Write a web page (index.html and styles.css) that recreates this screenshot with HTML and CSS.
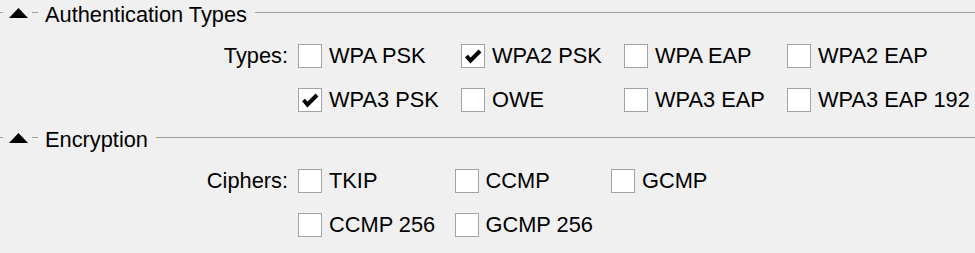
FILE: index.html
```html
<!DOCTYPE html>
<html lang="en">
<head>
  <meta charset="UTF-8">
  <title>Security Profile</title>
  <link rel="stylesheet" href="styles.css">
</head>
<body>
  <section class="group">
    <div class="group-head">
      <span class="dash dash-left"></span>
      <svg class="arrow" width="19" height="10" viewBox="0 0 19 10"><polygon points="9.5,0 19,10 0,10" fill="#000"/></svg>
      <span class="dash dash-mid"></span>
      <span class="group-title">Authentication Types</span>
      <span class="rule"></span>
    </div>
    <div class="field">
      <div class="field-label">Types:</div>
      <div class="options types">
        <label class="option"><span class="box"></span>WPA PSK</label>
        <label class="option"><span class="box checked"><svg width="24" height="24" viewBox="0 0 24 24"><polyline points="5.5,12 9.5,16.5 19,7" fill="none" stroke="#000" stroke-width="4"/></svg></span>WPA2 PSK</label>
        <label class="option"><span class="box"></span>WPA EAP</label>
        <label class="option"><span class="box"></span>WPA2 EAP</label>
        <label class="option"><span class="box checked"><svg width="24" height="24" viewBox="0 0 24 24"><polyline points="5.5,12 9.5,16.5 19,7" fill="none" stroke="#000" stroke-width="4"/></svg></span>WPA3 PSK</label>
        <label class="option"><span class="box"></span>OWE</label>
        <label class="option"><span class="box"></span>WPA3 EAP</label>
        <label class="option"><span class="box"></span>WPA3 EAP 192</label>
      </div>
    </div>
  </section>

  <section class="group">
    <div class="group-head">
      <span class="dash dash-left"></span>
      <svg class="arrow" width="19" height="10" viewBox="0 0 19 10"><polygon points="9.5,0 19,10 0,10" fill="#000"/></svg>
      <span class="dash dash-mid"></span>
      <span class="group-title">Encryption</span>
      <span class="rule"></span>
    </div>
    <div class="field">
      <div class="field-label">Ciphers:</div>
      <div class="options ciphers">
        <label class="option"><span class="box"></span>TKIP</label>
        <label class="option"><span class="box"></span>CCMP</label>
        <label class="option"><span class="box"></span>GCMP</label>
        <label class="option"><span class="box"></span>CCMP 256</label>
        <label class="option"><span class="box"></span>GCMP 256</label>
      </div>
    </div>
  </section>
</body>
</html>
```

FILE: styles.css
```css
body {
  margin: 0;
  background-color: #f0f0f0;
  color: #000;
  font-family: 'Liberation Sans', Arial, sans-serif;
  font-size: 21.8px;
  overflow: hidden;
}

.group + .group {
  margin-top: 13px;
}

.group-head {
  display: flex;
  align-items: center;
  height: 25px;
}

.dash {
  height: 1px;
  background-color: #a0a0a0;
  flex: none;
}

.dash-left {
  width: 3px;
  margin-right: 6px;
}

.arrow {
  flex: none;
  margin-top: 1px;
}

.dash-mid {
  width: 6px;
  margin-left: 4px;
  margin-right: 7px;
}

.group-title {
  white-space: nowrap;
  margin-top: 3px;
  line-height: 25px;
}

.rule {
  flex: 1;
  height: 1px;
  background-color: #a0a0a0;
  margin-left: 8px;
}

.field {
  display: flex;
  align-items: flex-start;
  padding-top: 19px;
}

.field-label {
  width: 288px;
  margin-right: 10px;
  text-align: right;
  height: 24px;
  line-height: 24px;
}

.options {
  display: grid;
  row-gap: 20px;
}

.types {
  grid-template-columns: repeat(4, 163px);
}

.ciphers {
  grid-template-columns: repeat(3, 156.5px);
}

.option {
  display: flex;
  align-items: center;
  height: 24px;
  white-space: nowrap;
}

.box {
  width: 22px;
  height: 22px;
  border: 1px solid #a3a3a3;
  background-color: #fff;
  margin-right: 7px;
  flex: none;
  position: relative;
}

.box svg {
  position: absolute;
  left: -1px;
  top: -1px;
}
```
